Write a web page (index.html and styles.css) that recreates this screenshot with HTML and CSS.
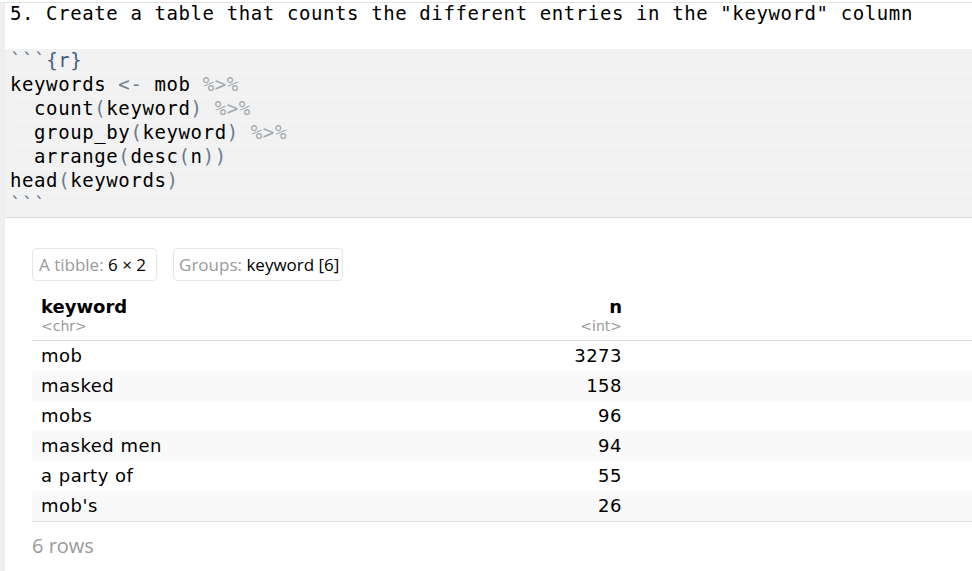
FILE: index.html
```html
<!DOCTYPE html>
<html>
<head>
<meta charset="utf-8">
<link rel="stylesheet" href="styles.css">
</head>
<body>
<div class="editor">
  <div class="md-line">5. Create a table that counts the different entries in the "keyword" column</div>
  <div class="chunk">
    <div class="cl"><span class="tick">```</span><span class="hdr">{r}</span></div>
    <div class="cl">keywords <span class="op">&lt;-</span> mob <span class="pipe">%&gt;%</span></div>
    <div class="cl">  count<span class="p">(</span>keyword<span class="p">)</span> <span class="pipe">%&gt;%</span></div>
    <div class="cl">  group_by<span class="p">(</span>keyword<span class="p">)</span> <span class="pipe">%&gt;%</span></div>
    <div class="cl">  arrange<span class="p">(</span>desc<span class="p">(</span>n<span class="p">))</span></div>
    <div class="cl">head<span class="p">(</span>keywords<span class="p">)</span></div>
    <div class="cl"><span class="tick">```</span></div>
  </div>
  <div class="output">
    <div class="badges">
      <div class="badge badge-dims"><span class="dim">A tibble:</span> 6 × 2</div>
      <div class="badge badge-groups"><span class="dim">Groups:</span> keyword [6]</div>
    </div>
    <div class="tbl">
      <div class="th"><div class="name">keyword</div><div class="type">&lt;chr&gt;</div></div>
      <div class="th num"><div class="name">n</div><div class="type">&lt;int&gt;</div></div>
      <div class="th fill"></div>

      <div class="td">mob</div><div class="td num">3273</div><div class="td fill"></div>
      <div class="td alt">masked</div><div class="td num alt">158</div><div class="td fill alt"></div>
      <div class="td">mobs</div><div class="td num">96</div><div class="td fill"></div>
      <div class="td alt">masked men</div><div class="td num alt">94</div><div class="td fill alt"></div>
      <div class="td">a party of</div><div class="td num">55</div><div class="td fill"></div>
      <div class="td alt last">mob's</div><div class="td num alt last">26</div><div class="td fill alt last"></div>
    </div>
    <div class="rows">6 rows</div>
  </div>
</div>
</body>
</html>
```
FILE: styles.css
```css
html, body {
  margin: 0;
  padding: 0;
  background: #ffffff;
}
body {
  height: 571px;
  overflow: hidden;
}
.editor {
  border-left: 5px solid #efefef;
  margin-top: 2px;
  border-top: 1px solid #e2e2e2;
  min-height: 568px;
}
.md-line {
  height: 46px;
  padding-left: 5px;
  font-family: "DejaVu Sans Mono", monospace;
  font-size: 19px;
  letter-spacing: 0.6px;
  line-height: 21px;
  color: #000;
  white-space: pre;
}
.chunk {
  background: #f2f2f2;
  border-bottom: 1px solid #dcdcdc;
  padding-left: 5px;
  font-family: "DejaVu Sans Mono", monospace;
  font-size: 19px;
  letter-spacing: 0.6px;
  color: #000;
}
.cl {
  height: 24px;
  line-height: 23px;
  box-sizing: border-box;
  border-bottom: 1px solid #f6f6f6;
  white-space: pre;
}
.cl:last-child { border-bottom: none; }
.tick { color: #5b7490; }
.hdr { color: #3f5d7e; }
.op { color: #6f8090; }
.p { color: #6a7c8e; }
.pipe { color: #a3a9b0; }

.output {
  padding: 30px 0 0 27px;
}
.badges {
  display: flex;
  gap: 16px;
  margin-bottom: 5px;
}
.badge {
  border: 1px solid #e6e6e6;
  border-radius: 4px;
  padding: 4px 6px 4px 6px;
  font-family: "Open Sans", sans-serif;
  font-size: 17px;
  line-height: 23px;
  color: #000;
}
.badge-dims { padding-right: 10px; }
.badge-groups { padding-left: 5px; padding-right: 3px; }
.dim { color: #9a9a9a; }

.tbl {
  display: grid;
  grid-template-columns: 300px 299px 1fr;
  font-family: "DejaVu Sans", sans-serif;
  font-size: 18px;
  letter-spacing: 0.5px;
  color: #000;
}
.th {
  padding: 10px 9px 6px 9px;
  border-bottom: 1px solid #dcdcdc;
}
.th .name {
  font-weight: bold;
  letter-spacing: 0;
  line-height: 22px;
  height: 22px;
}
.th .type {
  font-size: 14px;
  line-height: 16px;
  letter-spacing: 0;
  color: #9a9a9a;
}
.num { text-align: right; }
.td {
  height: 30px;
  line-height: 30px;
  padding: 0 9px;
  white-space: pre;
}
.alt { background: #f9f9f9; }
.last { border-bottom: 1px solid #dcdcdc; height: 30px; }
.rows {
  margin-top: 11px;
  font-family: "Open Sans", sans-serif;
  font-size: 20px;
  line-height: 26px;
  color: #9a9a9a;
}
```
